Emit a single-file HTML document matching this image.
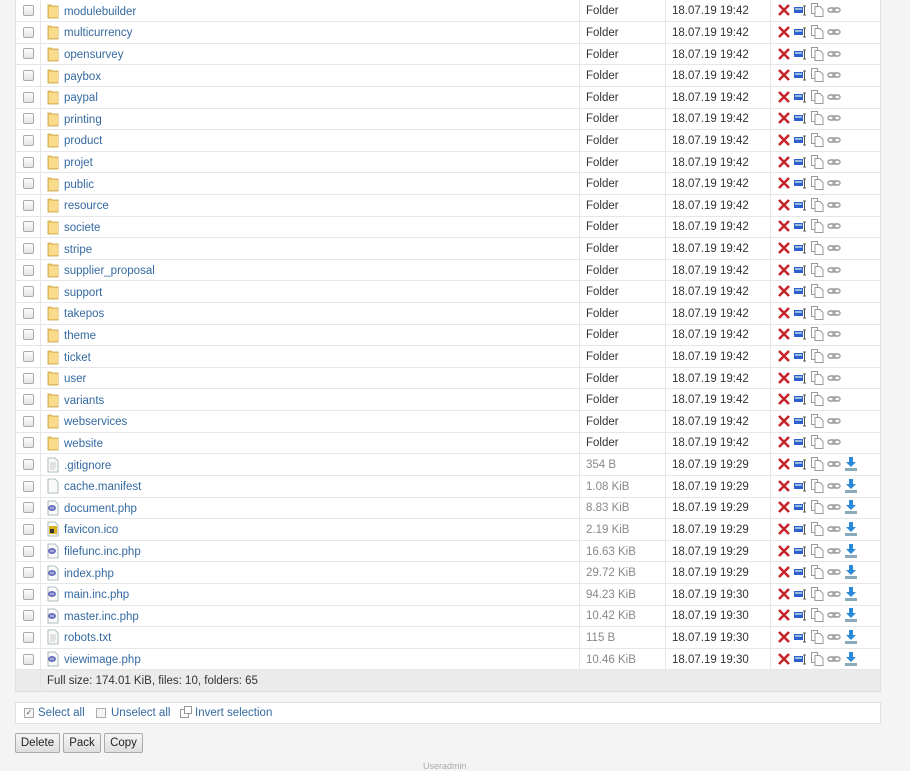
<!DOCTYPE html>
<html><head><meta charset="utf-8"><style>
body{margin:0;background:#f4f4f4;font-family:"Liberation Sans",sans-serif;font-size:11.5px;color:#333;width:910px;height:768px;overflow:hidden;position:relative}
table{position:absolute;left:15px;top:0;width:866px;border-collapse:collapse;background:#fff;table-layout:fixed}
tr{height:21.62px}
td{height:21.62px;box-sizing:border-box;border-bottom:1px solid #e6e6e6;border-right:1px solid #e6e6e6;padding:1px 0 0 6px;white-space:nowrap;vertical-align:middle;line-height:16px}
td:first-child{padding:0;text-align:center;border-left:1px solid #e0e0e0}
td:last-child{border-right:1px solid #e0e0e0}
.cb{display:inline-block;width:11px;height:11px;border:1px solid #aaa;border-radius:2px;background:linear-gradient(#fdfdfd,#e4e4e4);vertical-align:middle;box-sizing:border-box}
a{color:#3469a0;text-decoration:none}
.n svg{vertical-align:-4px;margin-right:5px}
.g{color:#888}
.ac svg{vertical-align:-3px;margin-right:1px}
tr.f td{background:#ebebeb;height:22px;border-bottom:1px solid #ddd}
.sel{position:absolute;left:15px;top:702px;width:864px;height:20px;background:#fff;border:1px solid #e0e0e0;font-size:11.5px;line-height:20px}
.sel span{position:absolute;top:0}
.btn{position:absolute;top:733px;height:18px;border:1px solid #aaa;background:linear-gradient(#f6f6f6,#dedede);font-size:11.5px;line-height:18px;text-align:center;color:#222;border-radius:2px}
</style></head><body>
<svg width="0" height="0" style="position:absolute">
<defs>
<symbol id="fo" viewBox="0 0 12 16"><path d="M1 2h3l1 1h6v12H1z" fill="#f0cc6e" stroke="#c9a040" stroke-width=".8"/><path d="M2 4h9v10H2z" fill="#f8dc8c"/></symbol>
<symbol id="fi" viewBox="0 0 12 16"><path d="M1 1h7l3 3v11H1z" fill="#fafafa" stroke="#9aa" stroke-width=".8"/><path d="M3 6h6M3 8h6M3 10h6M3 12h5" stroke="#bbb" stroke-width=".7"/></symbol>
<symbol id="fb" viewBox="0 0 12 16"><path d="M1 1h7l3 3v11H1z" fill="#fafafa" stroke="#9aa" stroke-width=".8"/></symbol>
<symbol id="fp" viewBox="0 0 12 16"><path d="M1 1h7l3 3v11H1z" fill="#fafafa" stroke="#9aa" stroke-width=".8"/><ellipse cx="5" cy="8" rx="4" ry="3" fill="#6b6fbf"/><path d="M3 8h4" stroke="#fff" stroke-width=".8"/></symbol>
<symbol id="fc" viewBox="0 0 12 16"><path d="M1 1h7l3 3v11H1z" fill="#fafafa" stroke="#9aa" stroke-width=".8"/><rect x="2" y="5" width="8" height="8" fill="#d8b020"/><rect x="3" y="8" width="4" height="4" fill="#333"/></symbol>
<symbol id="x" viewBox="0 0 14 14"><path d="M2 2l10 10M12 2L2 12" stroke="#c4262b" stroke-width="2.6"/></symbol>
<symbol id="m" viewBox="0 0 14 14"><rect x="1" y="4" width="9" height="6" fill="#2d5fd0"/><rect x="2" y="5" width="7" height="2" fill="#9bd"/><path d="M11.5 3v9M10 3h3M10 12h3" stroke="#555" stroke-width="1"/></symbol>
<symbol id="c" viewBox="0 0 14 14"><path d="M1.5 .5h6v10h-6z" fill="#fff" stroke="#999"/><path d="M5 3.5h5l3 3v7H5z" fill="#fff" stroke="#999"/></symbol>
<symbol id="l" viewBox="0 0 14 14"><rect x="1" y="5" width="7" height="4" rx="2" fill="none" stroke="#999" stroke-width="1.4"/><rect x="6" y="5" width="7" height="4" rx="2" fill="none" stroke="#999" stroke-width="1.4"/></symbol>
<symbol id="d" viewBox="0 0 14 14"><path d="M5 0h4v5h3L7 10 2 5h3z" fill="#2a8ad8"/><rect x="1" y="11" width="12" height="3" fill="#8ab"/></symbol>
</defs></svg>
<table>
<colgroup><col style="width:25px"><col style="width:539px"><col style="width:86px"><col style="width:105px"><col></colgroup>
<tr><td><span class="cb"></span></td><td class="n"><svg width="12" height="16"><use href="#fo"/></svg><a>modulebuilder</a></td><td>Folder</td><td>18.07.19 19:42</td><td class="ac"><svg width="14" height="14"><use href="#x"/></svg><svg width="16" height="14"><use href="#m"/></svg><svg width="16" height="14"><use href="#c"/></svg><svg width="16" height="14"><use href="#l"/></svg></td></tr>
<tr><td><span class="cb"></span></td><td class="n"><svg width="12" height="16"><use href="#fo"/></svg><a>multicurrency</a></td><td>Folder</td><td>18.07.19 19:42</td><td class="ac"><svg width="14" height="14"><use href="#x"/></svg><svg width="16" height="14"><use href="#m"/></svg><svg width="16" height="14"><use href="#c"/></svg><svg width="16" height="14"><use href="#l"/></svg></td></tr>
<tr><td><span class="cb"></span></td><td class="n"><svg width="12" height="16"><use href="#fo"/></svg><a>opensurvey</a></td><td>Folder</td><td>18.07.19 19:42</td><td class="ac"><svg width="14" height="14"><use href="#x"/></svg><svg width="16" height="14"><use href="#m"/></svg><svg width="16" height="14"><use href="#c"/></svg><svg width="16" height="14"><use href="#l"/></svg></td></tr>
<tr><td><span class="cb"></span></td><td class="n"><svg width="12" height="16"><use href="#fo"/></svg><a>paybox</a></td><td>Folder</td><td>18.07.19 19:42</td><td class="ac"><svg width="14" height="14"><use href="#x"/></svg><svg width="16" height="14"><use href="#m"/></svg><svg width="16" height="14"><use href="#c"/></svg><svg width="16" height="14"><use href="#l"/></svg></td></tr>
<tr><td><span class="cb"></span></td><td class="n"><svg width="12" height="16"><use href="#fo"/></svg><a>paypal</a></td><td>Folder</td><td>18.07.19 19:42</td><td class="ac"><svg width="14" height="14"><use href="#x"/></svg><svg width="16" height="14"><use href="#m"/></svg><svg width="16" height="14"><use href="#c"/></svg><svg width="16" height="14"><use href="#l"/></svg></td></tr>
<tr><td><span class="cb"></span></td><td class="n"><svg width="12" height="16"><use href="#fo"/></svg><a>printing</a></td><td>Folder</td><td>18.07.19 19:42</td><td class="ac"><svg width="14" height="14"><use href="#x"/></svg><svg width="16" height="14"><use href="#m"/></svg><svg width="16" height="14"><use href="#c"/></svg><svg width="16" height="14"><use href="#l"/></svg></td></tr>
<tr><td><span class="cb"></span></td><td class="n"><svg width="12" height="16"><use href="#fo"/></svg><a>product</a></td><td>Folder</td><td>18.07.19 19:42</td><td class="ac"><svg width="14" height="14"><use href="#x"/></svg><svg width="16" height="14"><use href="#m"/></svg><svg width="16" height="14"><use href="#c"/></svg><svg width="16" height="14"><use href="#l"/></svg></td></tr>
<tr><td><span class="cb"></span></td><td class="n"><svg width="12" height="16"><use href="#fo"/></svg><a>projet</a></td><td>Folder</td><td>18.07.19 19:42</td><td class="ac"><svg width="14" height="14"><use href="#x"/></svg><svg width="16" height="14"><use href="#m"/></svg><svg width="16" height="14"><use href="#c"/></svg><svg width="16" height="14"><use href="#l"/></svg></td></tr>
<tr><td><span class="cb"></span></td><td class="n"><svg width="12" height="16"><use href="#fo"/></svg><a>public</a></td><td>Folder</td><td>18.07.19 19:42</td><td class="ac"><svg width="14" height="14"><use href="#x"/></svg><svg width="16" height="14"><use href="#m"/></svg><svg width="16" height="14"><use href="#c"/></svg><svg width="16" height="14"><use href="#l"/></svg></td></tr>
<tr><td><span class="cb"></span></td><td class="n"><svg width="12" height="16"><use href="#fo"/></svg><a>resource</a></td><td>Folder</td><td>18.07.19 19:42</td><td class="ac"><svg width="14" height="14"><use href="#x"/></svg><svg width="16" height="14"><use href="#m"/></svg><svg width="16" height="14"><use href="#c"/></svg><svg width="16" height="14"><use href="#l"/></svg></td></tr>
<tr><td><span class="cb"></span></td><td class="n"><svg width="12" height="16"><use href="#fo"/></svg><a>societe</a></td><td>Folder</td><td>18.07.19 19:42</td><td class="ac"><svg width="14" height="14"><use href="#x"/></svg><svg width="16" height="14"><use href="#m"/></svg><svg width="16" height="14"><use href="#c"/></svg><svg width="16" height="14"><use href="#l"/></svg></td></tr>
<tr><td><span class="cb"></span></td><td class="n"><svg width="12" height="16"><use href="#fo"/></svg><a>stripe</a></td><td>Folder</td><td>18.07.19 19:42</td><td class="ac"><svg width="14" height="14"><use href="#x"/></svg><svg width="16" height="14"><use href="#m"/></svg><svg width="16" height="14"><use href="#c"/></svg><svg width="16" height="14"><use href="#l"/></svg></td></tr>
<tr><td><span class="cb"></span></td><td class="n"><svg width="12" height="16"><use href="#fo"/></svg><a>supplier_proposal</a></td><td>Folder</td><td>18.07.19 19:42</td><td class="ac"><svg width="14" height="14"><use href="#x"/></svg><svg width="16" height="14"><use href="#m"/></svg><svg width="16" height="14"><use href="#c"/></svg><svg width="16" height="14"><use href="#l"/></svg></td></tr>
<tr><td><span class="cb"></span></td><td class="n"><svg width="12" height="16"><use href="#fo"/></svg><a>support</a></td><td>Folder</td><td>18.07.19 19:42</td><td class="ac"><svg width="14" height="14"><use href="#x"/></svg><svg width="16" height="14"><use href="#m"/></svg><svg width="16" height="14"><use href="#c"/></svg><svg width="16" height="14"><use href="#l"/></svg></td></tr>
<tr><td><span class="cb"></span></td><td class="n"><svg width="12" height="16"><use href="#fo"/></svg><a>takepos</a></td><td>Folder</td><td>18.07.19 19:42</td><td class="ac"><svg width="14" height="14"><use href="#x"/></svg><svg width="16" height="14"><use href="#m"/></svg><svg width="16" height="14"><use href="#c"/></svg><svg width="16" height="14"><use href="#l"/></svg></td></tr>
<tr><td><span class="cb"></span></td><td class="n"><svg width="12" height="16"><use href="#fo"/></svg><a>theme</a></td><td>Folder</td><td>18.07.19 19:42</td><td class="ac"><svg width="14" height="14"><use href="#x"/></svg><svg width="16" height="14"><use href="#m"/></svg><svg width="16" height="14"><use href="#c"/></svg><svg width="16" height="14"><use href="#l"/></svg></td></tr>
<tr><td><span class="cb"></span></td><td class="n"><svg width="12" height="16"><use href="#fo"/></svg><a>ticket</a></td><td>Folder</td><td>18.07.19 19:42</td><td class="ac"><svg width="14" height="14"><use href="#x"/></svg><svg width="16" height="14"><use href="#m"/></svg><svg width="16" height="14"><use href="#c"/></svg><svg width="16" height="14"><use href="#l"/></svg></td></tr>
<tr><td><span class="cb"></span></td><td class="n"><svg width="12" height="16"><use href="#fo"/></svg><a>user</a></td><td>Folder</td><td>18.07.19 19:42</td><td class="ac"><svg width="14" height="14"><use href="#x"/></svg><svg width="16" height="14"><use href="#m"/></svg><svg width="16" height="14"><use href="#c"/></svg><svg width="16" height="14"><use href="#l"/></svg></td></tr>
<tr><td><span class="cb"></span></td><td class="n"><svg width="12" height="16"><use href="#fo"/></svg><a>variants</a></td><td>Folder</td><td>18.07.19 19:42</td><td class="ac"><svg width="14" height="14"><use href="#x"/></svg><svg width="16" height="14"><use href="#m"/></svg><svg width="16" height="14"><use href="#c"/></svg><svg width="16" height="14"><use href="#l"/></svg></td></tr>
<tr><td><span class="cb"></span></td><td class="n"><svg width="12" height="16"><use href="#fo"/></svg><a>webservices</a></td><td>Folder</td><td>18.07.19 19:42</td><td class="ac"><svg width="14" height="14"><use href="#x"/></svg><svg width="16" height="14"><use href="#m"/></svg><svg width="16" height="14"><use href="#c"/></svg><svg width="16" height="14"><use href="#l"/></svg></td></tr>
<tr><td><span class="cb"></span></td><td class="n"><svg width="12" height="16"><use href="#fo"/></svg><a>website</a></td><td>Folder</td><td>18.07.19 19:42</td><td class="ac"><svg width="14" height="14"><use href="#x"/></svg><svg width="16" height="14"><use href="#m"/></svg><svg width="16" height="14"><use href="#c"/></svg><svg width="16" height="14"><use href="#l"/></svg></td></tr>
<tr><td><span class="cb"></span></td><td class="n"><svg width="12" height="16"><use href="#fi"/></svg><a>.gitignore</a></td><td class="g">354 B</td><td>18.07.19 19:29</td><td class="ac"><svg width="14" height="14"><use href="#x"/></svg><svg width="16" height="14"><use href="#m"/></svg><svg width="16" height="14"><use href="#c"/></svg><svg width="16" height="14"><use href="#l"/></svg><svg width="16" height="14"><use href="#d"/></svg></td></tr>
<tr><td><span class="cb"></span></td><td class="n"><svg width="12" height="16"><use href="#fb"/></svg><a>cache.manifest</a></td><td class="g">1.08 KiB</td><td>18.07.19 19:29</td><td class="ac"><svg width="14" height="14"><use href="#x"/></svg><svg width="16" height="14"><use href="#m"/></svg><svg width="16" height="14"><use href="#c"/></svg><svg width="16" height="14"><use href="#l"/></svg><svg width="16" height="14"><use href="#d"/></svg></td></tr>
<tr><td><span class="cb"></span></td><td class="n"><svg width="12" height="16"><use href="#fp"/></svg><a>document.php</a></td><td class="g">8.83 KiB</td><td>18.07.19 19:29</td><td class="ac"><svg width="14" height="14"><use href="#x"/></svg><svg width="16" height="14"><use href="#m"/></svg><svg width="16" height="14"><use href="#c"/></svg><svg width="16" height="14"><use href="#l"/></svg><svg width="16" height="14"><use href="#d"/></svg></td></tr>
<tr><td><span class="cb"></span></td><td class="n"><svg width="12" height="16"><use href="#fc"/></svg><a>favicon.ico</a></td><td class="g">2.19 KiB</td><td>18.07.19 19:29</td><td class="ac"><svg width="14" height="14"><use href="#x"/></svg><svg width="16" height="14"><use href="#m"/></svg><svg width="16" height="14"><use href="#c"/></svg><svg width="16" height="14"><use href="#l"/></svg><svg width="16" height="14"><use href="#d"/></svg></td></tr>
<tr><td><span class="cb"></span></td><td class="n"><svg width="12" height="16"><use href="#fp"/></svg><a>filefunc.inc.php</a></td><td class="g">16.63 KiB</td><td>18.07.19 19:29</td><td class="ac"><svg width="14" height="14"><use href="#x"/></svg><svg width="16" height="14"><use href="#m"/></svg><svg width="16" height="14"><use href="#c"/></svg><svg width="16" height="14"><use href="#l"/></svg><svg width="16" height="14"><use href="#d"/></svg></td></tr>
<tr><td><span class="cb"></span></td><td class="n"><svg width="12" height="16"><use href="#fp"/></svg><a>index.php</a></td><td class="g">29.72 KiB</td><td>18.07.19 19:29</td><td class="ac"><svg width="14" height="14"><use href="#x"/></svg><svg width="16" height="14"><use href="#m"/></svg><svg width="16" height="14"><use href="#c"/></svg><svg width="16" height="14"><use href="#l"/></svg><svg width="16" height="14"><use href="#d"/></svg></td></tr>
<tr><td><span class="cb"></span></td><td class="n"><svg width="12" height="16"><use href="#fp"/></svg><a>main.inc.php</a></td><td class="g">94.23 KiB</td><td>18.07.19 19:30</td><td class="ac"><svg width="14" height="14"><use href="#x"/></svg><svg width="16" height="14"><use href="#m"/></svg><svg width="16" height="14"><use href="#c"/></svg><svg width="16" height="14"><use href="#l"/></svg><svg width="16" height="14"><use href="#d"/></svg></td></tr>
<tr><td><span class="cb"></span></td><td class="n"><svg width="12" height="16"><use href="#fp"/></svg><a>master.inc.php</a></td><td class="g">10.42 KiB</td><td>18.07.19 19:30</td><td class="ac"><svg width="14" height="14"><use href="#x"/></svg><svg width="16" height="14"><use href="#m"/></svg><svg width="16" height="14"><use href="#c"/></svg><svg width="16" height="14"><use href="#l"/></svg><svg width="16" height="14"><use href="#d"/></svg></td></tr>
<tr><td><span class="cb"></span></td><td class="n"><svg width="12" height="16"><use href="#fi"/></svg><a>robots.txt</a></td><td class="g">115 B</td><td>18.07.19 19:30</td><td class="ac"><svg width="14" height="14"><use href="#x"/></svg><svg width="16" height="14"><use href="#m"/></svg><svg width="16" height="14"><use href="#c"/></svg><svg width="16" height="14"><use href="#l"/></svg><svg width="16" height="14"><use href="#d"/></svg></td></tr>
<tr><td><span class="cb"></span></td><td class="n"><svg width="12" height="16"><use href="#fp"/></svg><a>viewimage.php</a></td><td class="g">10.46 KiB</td><td>18.07.19 19:30</td><td class="ac"><svg width="14" height="14"><use href="#x"/></svg><svg width="16" height="14"><use href="#m"/></svg><svg width="16" height="14"><use href="#c"/></svg><svg width="16" height="14"><use href="#l"/></svg><svg width="16" height="14"><use href="#d"/></svg></td></tr>
<tr class="f"><td></td><td colspan="4" style="border-right:1px solid #e0e0e0">Full size: 174.01 KiB, files: 10, folders: 65</td></tr>
</table>
<div class="sel">
<span style="left:8px;top:5px;width:8px;height:8px;border:1px solid #aaa;background:#f6f6f6;font-size:8px;line-height:8px;text-align:center;color:#555">✓</span>
<span style="left:22px"><a>Select all</a></span>
<span style="left:80px;top:5px;width:8px;height:8px;border:1px solid #aaa;background:#f6f6f6"></span>
<span style="left:95px"><a>Unselect all</a></span>
<span style="left:164px;top:6px;width:7px;height:7px;border:1px solid #999;background:#fff"></span>
<span style="left:168px;top:3px;width:6px;height:6px;border:1px solid #999;background:#fff"></span>
<span style="left:179px"><a>Invert selection</a></span>
</div>
<div class="btn" style="left:15px;width:43px">Delete</div>
<div class="btn" style="left:63px;width:36px">Pack</div>
<div class="btn" style="left:104px;width:37px">Copy</div>
<div style="position:absolute;left:423px;top:761px;font-size:9px;color:#aaa">Useradmin</div>
</body></html>
